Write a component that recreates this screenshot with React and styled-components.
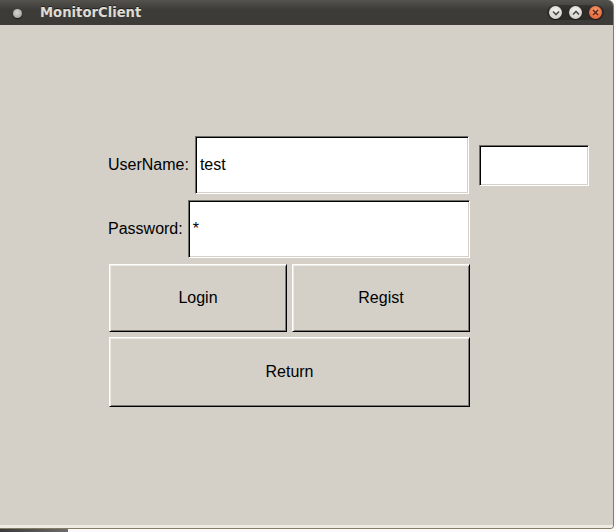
import React from 'react'
import styled, { createGlobalStyle } from 'styled-components'

const GlobalStyle = createGlobalStyle`
    html, body {margin: 0; padding: 0; background: #fbfaf8;}
    body {font-family: "Liberation Sans", Arial, sans-serif;}
    * {box-sizing: border-box;}
`

const App = () => {
    return (
        <>
            <GlobalStyle />
            <Page>
                <Window>
                    <TitleBar>
                        <AppIcon />
                        <Title>MonitorClient</Title>
                        <Controls>
                            <CtlBtn>
                                <svg width="8" height="6" viewBox="0 0 8 6"><path d="M1 1.5 L4 4.5 L7 1.5" fill="none" stroke="#4a4945" strokeWidth="1.6" /></svg>
                            </CtlBtn>
                            <CtlBtn>
                                <svg width="8" height="6" viewBox="0 0 8 6"><path d="M1 4.5 L4 1.5 L7 4.5" fill="none" stroke="#4a4945" strokeWidth="1.6" /></svg>
                            </CtlBtn>
                            <CtlBtn $close>
                                <svg width="7" height="7" viewBox="0 0 7 7"><path d="M1 1 L6 6 M6 1 L1 6" fill="none" stroke="#5a2a18" strokeWidth="1.5" /></svg>
                            </CtlBtn>
                        </Controls>
                    </TitleBar>
                    <Content>
                        <Form>
                            <Row>
                                <Field $gap={6}>
                                    <Label>UserName:</Label>
                                    <Entry>test</Entry>
                                </Field>
                                <SmallEntry />
                            </Row>
                            <Field>
                                <Label>Password:</Label>
                                <Entry>*</Entry>
                            </Field>
                            <BtnRow>
                                <Button>Login</Button>
                                <Button>Regist</Button>
                            </BtnRow>
                            <Button $wide>Return</Button>
                        </Form>
                    </Content>
                </Window>
                <Desktop>
                    <TaskItem />
                </Desktop>
            </Page>
        </>
    )
}

const Page = styled.div `
    width: 616px; height: 532px; overflow: hidden; display: flex; flex-direction: column;
`
const Window = styled.div `
    width: 614px; height: 529px; display: flex; flex-direction: column;
    border-right: 1px solid #857c68; border-bottom: 1px solid #857c68; border-bottom-right-radius: 4px;
    border-top-right-radius: 6px; overflow: hidden; background: #d4d0c8;
`
const TitleBar = styled.div `
    height: 25px; flex-shrink: 0; display: flex; align-items: center;
    background: linear-gradient(#55534e, #3c3b37 40%, #3c3b37);
`
const AppIcon = styled.div `
    width: 9px; height: 9px; border-radius: 50%; margin-left: 13px; margin-top: 2px;
    background: radial-gradient(circle at 45% 40%, #d8d6d2, #9a9892);
    box-shadow: 0 1px 1px rgba(0,0,0,0.6);
`
const Title = styled.div `
    margin-left: 18px; color: #dfdbd2; font-family: "DejaVu Sans", sans-serif; font-weight: 700; font-size: 13.2px;
    text-shadow: 0 -1px 0 rgba(0,0,0,0.5);
`
const Controls = styled.div `
    margin-left: auto; margin-right: 9px; display: flex; align-items: center; gap: 7px;
    padding: 1px 2px; border-radius: 9px; background: rgba(0,0,0,0.25);
`
const CtlBtn = styled.div `
    width: 13px; height: 13px; border-radius: 50%; display: flex; align-items: center; justify-content: center;
    background: ${p => p.$close ? 'radial-gradient(circle at 50% 35%, #f59a6c, #e0562a)' : 'radial-gradient(circle at 50% 35%, #f4f3f1, #c9c6c0)'};
    box-shadow: 0 1px 1px rgba(0,0,0,0.5);
`
const Content = styled.div `
    flex: 1; background: #d4d0c8; border-bottom: 3px solid #efebe2; padding: 111px 0 0 108px;
`
const Form = styled.div `
    width: 362px; display: flex; flex-direction: column; gap: 6px;
`
const Row = styled.div `
    display: flex; align-items: center; width: 481px;
    > div:first-child {width: 361px;}
`
const Field = styled.div `
    display: flex; align-items: center; gap: ${p => p.$gap ?? 5}px;
`
const Label = styled.div `
    font-size: 16px; color: #000; white-space: nowrap;
`
const Entry = styled.div `
    flex: 1; height: 58px; background: #fff; font-size: 16px; color: #000;
    display: flex; align-items: center; padding-left: 4px;
    border: 1px solid; border-color: #6f6d68 #fff #fff #6f6d68;
    box-shadow: inset 1px 1px 0 #000, inset -1px -1px 0 #d4d0c8;
`
const SmallEntry = styled.div `
    width: 110px; height: 41px; margin-left: 10px; background: #fff;
    border: 1px solid; border-color: #6f6d68 #fff #fff #6f6d68;
    box-shadow: inset 1px 1px 0 #000, inset -1px -1px 0 #d4d0c8;
`
const BtnRow = styled.div `
    display: flex; gap: 5px; margin-left: 1px;
    > div {flex: 1;}
`
const Button = styled.div `
    height: ${p => p.$wide ? 70 : 68}px; margin: ${p => p.$wide ? '-1px 0 0 1px' : '0'};
    background: #d4d0c8; font-size: 16px; color: #000;
    display: flex; align-items: center; justify-content: center;
    border: 1px solid; border-color: #fff #000 #000 #fff;
    box-shadow: inset 1px 1px 0 #ece9e3, inset -1px -1px 0 #7c7a75;
`
const Desktop = styled.div `
    flex: 1; display: flex; background: #fbfaf8;
`
const TaskItem = styled.div `
    width: 68px; background: linear-gradient(90deg, #3a3a38, #6d6c69);
`

export default App
